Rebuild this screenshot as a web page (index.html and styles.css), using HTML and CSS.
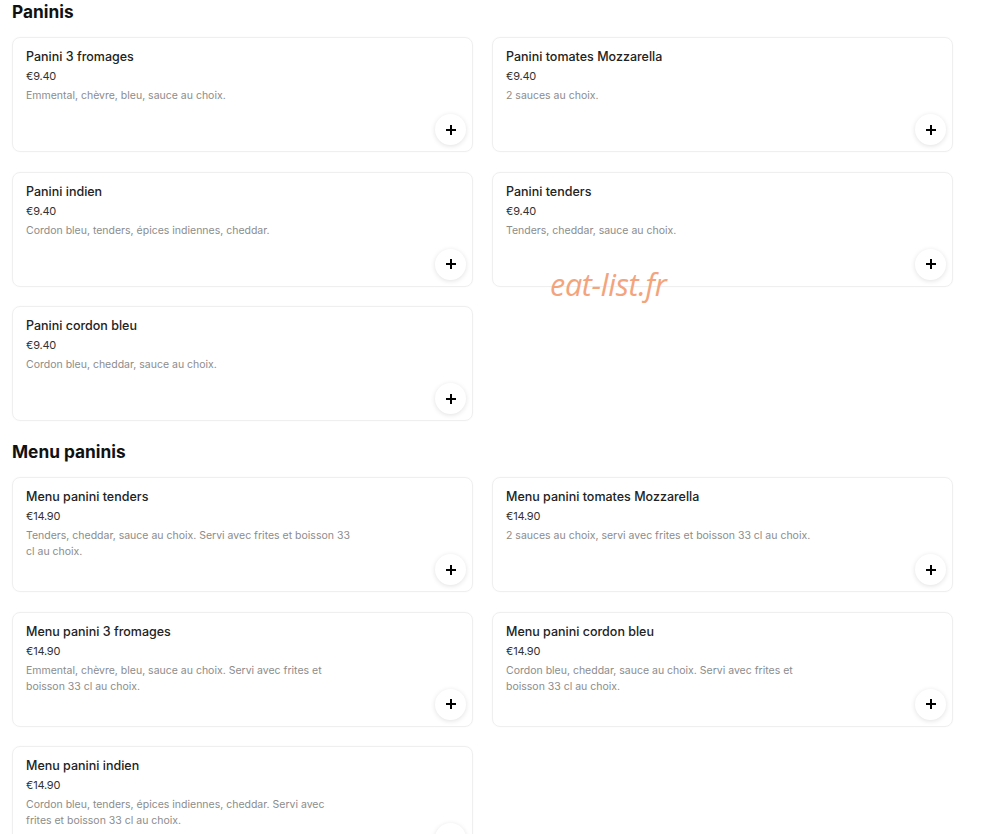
FILE: index.html
```html
<!DOCTYPE html>
<html lang="fr">
<head>
<meta charset="utf-8">
<title>Paninis</title>
<link rel="stylesheet" href="styles.css">
</head>
<body>
<main class="page">
  <section class="section">
    <h2 class="section-title">Paninis</h2>
    <div class="grid">
      <article class="card">
        <h3 class="item-title">Panini 3 fromages</h3>
        <div class="price">€9.40</div>
        <p class="desc">Emmental, chèvre, bleu, sauce au choix.</p>
        <button class="add" aria-label="Ajouter"><svg viewBox="0 0 12 12" width="12" height="12"><path d="M6 1v10M1 6h10" stroke="#000" stroke-width="2"/></svg></button>
      </article>
      <article class="card">
        <h3 class="item-title">Panini tomates Mozzarella</h3>
        <div class="price">€9.40</div>
        <p class="desc">2 sauces au choix.</p>
        <button class="add" aria-label="Ajouter"><svg viewBox="0 0 12 12" width="12" height="12"><path d="M6 1v10M1 6h10" stroke="#000" stroke-width="2"/></svg></button>
      </article>
      <article class="card">
        <h3 class="item-title">Panini indien</h3>
        <div class="price">€9.40</div>
        <p class="desc">Cordon bleu, tenders, épices indiennes, cheddar.</p>
        <button class="add" aria-label="Ajouter"><svg viewBox="0 0 12 12" width="12" height="12"><path d="M6 1v10M1 6h10" stroke="#000" stroke-width="2"/></svg></button>
      </article>
      <article class="card">
        <h3 class="item-title">Panini tenders</h3>
        <div class="price">€9.40</div>
        <p class="desc">Tenders, cheddar, sauce au choix.</p>
        <button class="add" aria-label="Ajouter"><svg viewBox="0 0 12 12" width="12" height="12"><path d="M6 1v10M1 6h10" stroke="#000" stroke-width="2"/></svg></button>
      </article>
      <article class="card">
        <h3 class="item-title">Panini cordon bleu</h3>
        <div class="price">€9.40</div>
        <p class="desc">Cordon bleu, cheddar, sauce au choix.</p>
        <button class="add" aria-label="Ajouter"><svg viewBox="0 0 12 12" width="12" height="12"><path d="M6 1v10M1 6h10" stroke="#000" stroke-width="2"/></svg></button>
      </article>
    </div>
  </section>

  <section class="section">
    <h2 class="section-title">Menu paninis</h2>
    <div class="grid">
      <article class="card">
        <h3 class="item-title">Menu panini tenders</h3>
        <div class="price">€14.90</div>
        <p class="desc">Tenders, cheddar, sauce au choix. Servi avec frites et boisson 33 cl au choix.</p>
        <button class="add" aria-label="Ajouter"><svg viewBox="0 0 12 12" width="12" height="12"><path d="M6 1v10M1 6h10" stroke="#000" stroke-width="2"/></svg></button>
      </article>
      <article class="card">
        <h3 class="item-title">Menu panini tomates Mozzarella</h3>
        <div class="price">€14.90</div>
        <p class="desc wide">2 sauces au choix, servi avec frites et boisson 33 cl au choix.</p>
        <button class="add" aria-label="Ajouter"><svg viewBox="0 0 12 12" width="12" height="12"><path d="M6 1v10M1 6h10" stroke="#000" stroke-width="2"/></svg></button>
      </article>
      <article class="card">
        <h3 class="item-title">Menu panini 3 fromages</h3>
        <div class="price">€14.90</div>
        <p class="desc">Emmental, chèvre, bleu, sauce au choix. Servi avec frites et boisson 33 cl au choix.</p>
        <button class="add" aria-label="Ajouter"><svg viewBox="0 0 12 12" width="12" height="12"><path d="M6 1v10M1 6h10" stroke="#000" stroke-width="2"/></svg></button>
      </article>
      <article class="card">
        <h3 class="item-title">Menu panini cordon bleu</h3>
        <div class="price">€14.90</div>
        <p class="desc">Cordon bleu, cheddar, sauce au choix. Servi avec frites et boisson 33 cl au choix.</p>
        <button class="add" aria-label="Ajouter"><svg viewBox="0 0 12 12" width="12" height="12"><path d="M6 1v10M1 6h10" stroke="#000" stroke-width="2"/></svg></button>
      </article>
      <article class="card">
        <h3 class="item-title">Menu panini indien</h3>
        <div class="price">€14.90</div>
        <p class="desc">Cordon bleu, tenders, épices indiennes, cheddar. Servi avec frites et boisson 33 cl au choix.</p>
        <button class="add" aria-label="Ajouter"><svg viewBox="0 0 12 12" width="12" height="12"><path d="M6 1v10M1 6h10" stroke="#000" stroke-width="2"/></svg></button>
      </article>
    </div>
  </section>
</main>
<div class="watermark">eat-list.fr</div>
</body>
</html>
```
FILE: styles.css
```css
* { box-sizing: border-box; }
html, body {
  margin: 0;
  padding: 0;
  background: #fff;
  font-family: Inter, "Noto Sans", "Liberation Sans", sans-serif;
  color: #000;
  overflow: hidden;
}
.page {
  padding: 0 0 0 12px;
  width: 953px;
}
.section-title {
  margin: 0;
  font-size: 17.3px;
  line-height: 24px;
  font-weight: 700;
  letter-spacing: 0;
  color: #111;
}
.section + .section .section-title {
  margin-top: 19px;
}
.grid {
  margin-top: 13px;
  display: grid;
  grid-template-columns: 461px 461px;
  column-gap: 19px;
  row-gap: 19.5px;
}
.card {
  position: relative;
  height: 115px;
  border: 1px solid #efefef;
  border-radius: 8px;
  padding: 10px 13px;
  display: flex;
  flex-direction: column;
  box-shadow: 0 0 2px rgba(0,0,0,0.03);
}
.item-title {
  margin: 0;
  font-size: 12.5px;
  line-height: 18px;
  font-weight: 450;
  color: #222;
}
.price {
  margin-top: 2px;
  font-size: 11px;
  line-height: 16px;
  color: #333;
  letter-spacing: -0.2px;
}
.desc {
  margin: 4px 0 0;
  max-width: 326px;
  font-size: 10.5px;
  line-height: 16px;
  color: #8c8c8c;
}
.desc.wide { max-width: 380px; }
.add {
  position: absolute;
  right: 6px;
  bottom: 6px;
  width: 31px;
  height: 31px;
  border-radius: 50%;
  border: none;
  background: #fff;
  box-shadow: 0 1px 5px rgba(0,0,0,0.12);
  display: flex;
  align-items: center;
  justify-content: center;
  padding: 0;
}
.watermark {
  position: absolute;
  left: 550px;
  top: 264px;
  font-family: "Open Sans", sans-serif;
  font-style: italic;
  font-size: 30.5px;
  line-height: 40px;
  color: #f4a47c;
  letter-spacing: -0.3px;
}
```
